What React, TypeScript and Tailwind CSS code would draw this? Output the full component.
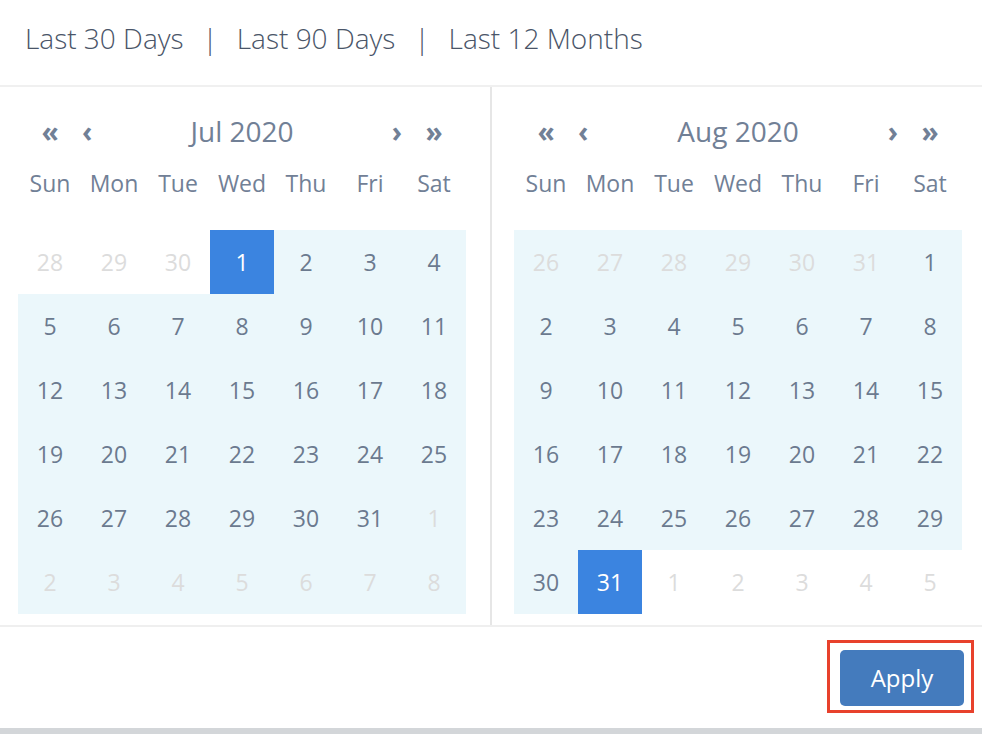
import React from "react";

type Cell = { d: number; muted?: boolean; sel?: boolean; range?: boolean };

const DAYS = ["Sun", "Mon", "Tue", "Wed", "Thu", "Fri", "Sat"];

// Build a 6x7 month grid. `range` marks the tinted cells.
function buildJul(): Cell[] {
  const cells: Cell[] = [];
  [28, 29, 30].forEach((d) => cells.push({ d, muted: true }));
  for (let d = 1; d <= 31; d++) cells.push({ d, sel: d === 1, range: d > 1 });
  for (let d = 1; d <= 8; d++) cells.push({ d, muted: true, range: true });
  return cells;
}

function buildAug(): Cell[] {
  const cells: Cell[] = [];
  [26, 27, 28, 29, 30, 31].forEach((d) => cells.push({ d, muted: true, range: true }));
  for (let d = 1; d <= 31; d++) cells.push({ d, sel: d === 31, range: d < 31 });
  for (let d = 1; d <= 5; d++) cells.push({ d, muted: true });
  return cells;
}

function Month({ title, cells }: { title: string; cells: Cell[] }) {
  return (
    <div className="w-[448px]">
      {/* Nav row */}
      <div className="mt-[12px] grid h-[64px] grid-cols-[repeat(7,64px)] items-center text-[#718096]">
        <button type="button" className="text-center text-[28px] font-bold leading-none">
          «
        </button>
        <button type="button" className="text-left text-[28px] font-bold leading-none">
          ‹
        </button>
        <div className="col-span-3 text-center text-[28px] leading-none">{title}</div>
        <button type="button" className="text-right text-[28px] font-bold leading-none">
          ›
        </button>
        <button type="button" className="text-center text-[28px] font-bold leading-none">
          »
        </button>
      </div>
      {/* Weekdays */}
      <div className="grid h-[40px] grid-cols-[repeat(7,64px)] items-center text-[23px] text-[#718096]">
        {DAYS.map((d) => (
          <div key={d} className="text-center">
            {d}
          </div>
        ))}
      </div>
      {/* Dates */}
      <div className="mt-[27px] grid grid-cols-[repeat(7,64px)] grid-rows-[repeat(6,64px)] text-[23px]">
        {cells.map((c, i) => (
          <div
            key={i}
            className={
              "flex items-center justify-center " +
              (c.sel
                ? "bg-[#3b84e0] text-white"
                : (c.range ? "bg-[#ebf7fb] " : "bg-white ") +
                  (c.muted ? "text-[#dcdcdc]" : "text-[#6b7a8f]"))
            }
          >
            {c.d}
          </div>
        ))}
      </div>
    </div>
  );
}

export default function App() {
  return (
    <div
      className="relative flex h-[734px] w-[982px] flex-col bg-white"
      style={{ fontFamily: '"Open Sans", "Noto Sans", sans-serif' }}
    >
      {/* Quick ranges */}
      <div className="flex h-[87px] shrink-0 items-start gap-[19px] border-b-2 border-[#f0f0f0] pl-[25px] pt-[19px] text-[28px] font-light leading-[38px] text-[#4a5568]">
        <span>Last 30 Days</span>
        <span>|</span>
        <span>Last 90 Days</span>
        <span>|</span>
        <span>Last 12 Months</span>
      </div>

      {/* Calendars */}
      <div className="flex h-[540px] shrink-0 border-b-2 border-[#efefef]">
        <div className="w-[492px] shrink-0 border-r-2 border-[#e6e6e6] pl-[18px]">
          <Month title="Jul 2020" cells={buildJul()} />
        </div>
        <div className="pl-[22px]">
          <Month title="Aug 2020" cells={buildAug()} />
        </div>
      </div>

      {/* Footer */}
      <div className="flex flex-1 items-start justify-end pr-[8px] pt-[13px]">
        <div className="border-[3px] border-[#e8412c] pb-[4px] pl-[10px] pr-[7px] pt-[7px]">
          <button
            type="button"
            className="h-[56px] w-[124px] rounded-[5px] bg-[#447bbd] text-[24px] text-white"
          >
            Apply
          </button>
        </div>
      </div>
      <div className="h-[6px] shrink-0 bg-[#d3d6d9]" />
    </div>
  );
}
